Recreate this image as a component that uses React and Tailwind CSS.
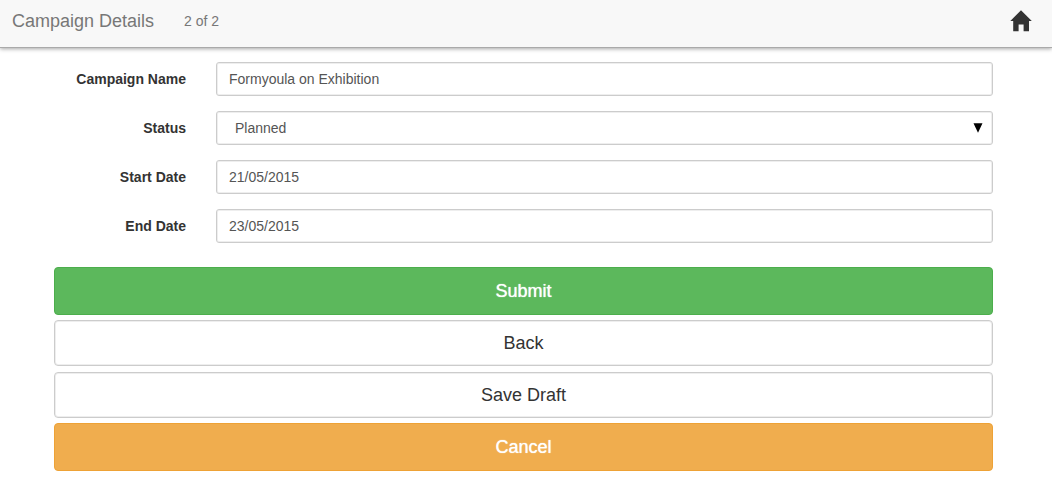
import { useState } from 'react'

const inputClass =
  'block w-full h-[34px] px-3 pb-px text-sm text-[#555] bg-white border border-[#ccc] rounded-[3px] shadow-[inset_0_0_0_1px_#eee] outline-none focus:border-[#66afe9]'

const HomeIcon = () => (
  <svg className="w-[22px] h-[22px]" viewBox="0 0 22 22" fill="#333" aria-hidden="true">
    <path d="M11 0.3 L21.8 11 H19 V21.3 H13.6 V14.6 H8.6 V21.3 H3.2 V11 H0.3 Z" />
  </svg>
)

const FormRow = ({ id, label, children }) => (
  <div className="flex items-center gap-[30px]">
    <label htmlFor={id} className="w-[132px] shrink-0 pb-px text-right text-sm font-bold text-[#333]">
      {label}
    </label>
    <div className="relative flex-1">{children}</div>
  </div>
)

const App = () => {
  const [campaign, setCampaign] = useState({
    name: 'Formyoula on Exhibition',
    status: 'Planned',
    startDate: '21/05/2015',
    endDate: '23/05/2015'
  })

  const handleChange = (e) => {
    const { name, value } = e.target
    setCampaign(prev => ({ ...prev, [name]: value }))
  }

  return (
    <div className="font-['Liberation_Sans',Arial,sans-serif]">
      {/* Header */}
      <header className="flex items-center justify-between h-12 pl-3 pr-5 pb-[5px] bg-[#f8f8f8] border-b border-[#aaa] shadow-[0_1px_4px_rgba(0,0,0,0.35)]">
        <div className="flex items-center gap-[30px] text-[#777]">
          <h1 className="text-lg">Campaign Details</h1>
          <span className="text-sm">2 of 2</span>
        </div>
        <a href="#home" aria-label="Home">
          <HomeIcon />
        </a>
      </header>

      <form onSubmit={(e) => e.preventDefault()} className="pt-[14px] pl-[54px] pr-[59px] pb-2">
        {/* Fields */}
        <div className="flex flex-col gap-[15px]">
          <FormRow id="name" label="Campaign Name">
            <input id="name" name="name" type="text" value={campaign.name} onChange={handleChange} className={inputClass} />
          </FormRow>
          <FormRow id="status" label="Status">
            <select
              id="status"
              name="status"
              value={campaign.status}
              onChange={handleChange}
              className={`${inputClass} appearance-none pl-[18px]`}
            >
              <option>Planned</option>
              <option>In Progress</option>
              <option>Completed</option>
              <option>Aborted</option>
            </select>
            <svg className="absolute right-[10px] top-3 w-[10px] h-[10px] pointer-events-none" viewBox="0 0 10 10" aria-hidden="true">
              <path d="M0.5 0.3 H9.5 L5 9.7 Z" fill="#000" />
            </svg>
          </FormRow>
          <FormRow id="startDate" label="Start Date">
            <input id="startDate" name="startDate" type="text" value={campaign.startDate} onChange={handleChange} className={inputClass} />
          </FormRow>
          <FormRow id="endDate" label="End Date">
            <input id="endDate" name="endDate" type="text" value={campaign.endDate} onChange={handleChange} className={inputClass} />
          </FormRow>
        </div>

        {/* Actions */}
        <div className="flex flex-col gap-1 mt-6 text-lg">
          <button type="submit" className="h-12 rounded text-white [text-shadow:0_0_1px_#fff] bg-[#5cb85c] border border-[#4cae4c]">
            Submit
          </button>
          <button type="button" className="h-[46px] my-px rounded text-[#333] bg-white border border-[#ccc] shadow-[inset_0_0_0_1px_#eee]">
            Back
          </button>
          <button type="button" className="h-[46px] my-px rounded text-[#333] bg-white border border-[#ccc] shadow-[inset_0_0_0_1px_#eee]">
            Save Draft
          </button>
          <button type="button" className="h-12 rounded text-white [text-shadow:0_0_1px_#fff] bg-[#f0ad4e] border border-[#eea236]">
            Cancel
          </button>
        </div>
      </form>
    </div>
  )
}

export default App
